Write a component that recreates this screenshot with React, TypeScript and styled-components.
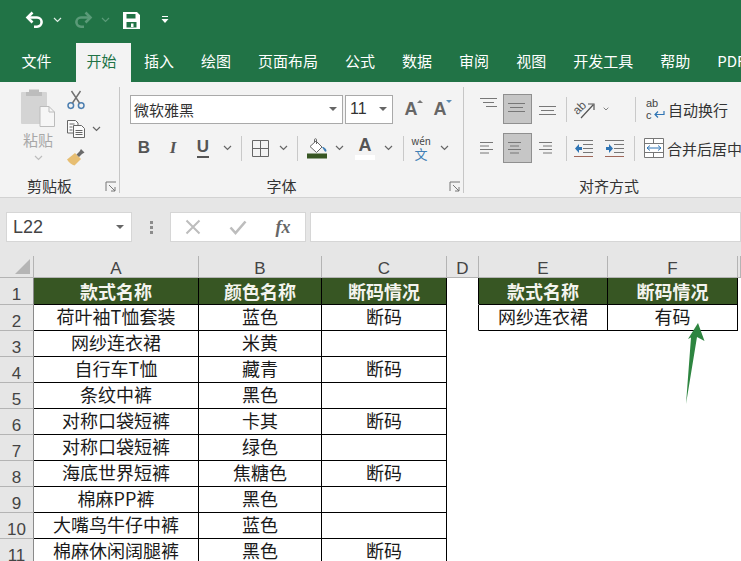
import React from 'react'
import styled, { createGlobalStyle } from 'styled-components'

const CJK = `"Noto Sans CJK SC", "Noto Sans", sans-serif`
const LATIN = `"Liberation Sans", "Noto Sans CJK SC", sans-serif`

const GlobalStyle = createGlobalStyle`
  html, body { margin: 0; padding: 0; background: #fff; }
  body { font-family: ${CJK}; overflow: hidden; }
  * { box-sizing: border-box; }
`

const Page = styled.div`
  width: 741px;
  height: 561px;
  overflow: hidden;
  display: flex;
  flex-direction: column;
`

/* title bar */
const TitleBar = styled.div`
  height: 43px;
  flex: none;
  background: #217346;
  display: flex;
  align-items: center;
  padding: 0 0 3px 25px;
`
const Slot = styled.div<{ $w: number; $ml?: number }>`
  width: ${({ $w }) => $w}px;
  margin-left: ${({ $ml }) => $ml || 0}px;
  flex: none;
  height: 100%;
  display: flex;
  align-items: center;
  justify-content: center;
`

/* tabs */
const TabBar = styled.div`
  height: 39px;
  flex: none;
  background: #217346;
  display: flex;
  padding-left: 8px;
  overflow: hidden;
`
const Tab = styled.div<{ $active?: boolean }>`
  flex: none;
  height: 39px;
  padding: ${({ $active }) => ($active ? '0 14px 0 11px' : '0 13.5px')};
  margin-left: ${({ $active }) => ($active ? '10.5px' : '0')};
  line-height: 35px;
  font-size: 15px;
  white-space: nowrap;
  color: ${({ $active }) => ($active ? '#217346' : '#fff')};
  background: ${({ $active }) => ($active ? '#f3f3f3' : 'transparent')};
`

/* ribbon */
const Ribbon = styled.div`
  height: 116px;
  flex: none;
  background: #f3f3f3;
  border-bottom: 1px solid #d2d2d2;
  display: flex;
  overflow: hidden;
`
const Group = styled.div<{ $w: number }>`
  width: ${({ $w }) => $w}px;
  flex: none;
  display: flex;
  flex-direction: column;
  position: relative;
  &::after {
    content: '';
    position: absolute;
    right: 0;
    top: 5px;
    bottom: 4px;
    width: 1px;
    background: #c6c6c6;
  }
`
const GroupBody = styled.div`
  flex: 1;
  padding: 12px 0 0 10px;
  display: flex;
  flex-direction: column;
  gap: 9px;
`
const ClipBody = styled.div`
  flex: 1;
  display: flex;
  padding: 6px 0 0 18px;
`
const PasteColumn = styled.div`
  width: 40px;
  display: flex;
  flex-direction: column;
  align-items: center;
  color: #a8a8a8;
  font-size: 15px;
  line-height: 20px;
`
const PasteChevron = styled.div`
  margin-top: 5px;
  line-height: 0;
`
const ClipTools = styled.div`
  margin-left: 9px;
  display: flex;
  flex-direction: column;
  gap: 4.5px;
`
const ClipTool = styled.div`
  height: 24px;
  display: flex;
  align-items: center;
  gap: 7px;
`
const GroupFoot = styled.div`
  height: 22px;
  display: flex;
  align-items: center;
  padding-right: 3px;
`
const FootLabel = styled.div`
  flex: 1;
  text-align: center;
  font-size: 15px;
  line-height: 20px;
  color: #333;
  padding-right: 6px;
  white-space: nowrap;
`
const Row = styled.div`
  height: 30px;
  display: flex;
  align-items: center;
`
const SelectBox = styled.div<{ $w: number; $ml?: number }>`
  width: ${({ $w }) => $w}px;
  margin-left: ${({ $ml }) => $ml || 0}px;
  height: 29px;
  flex: none;
  border: 1px solid #a9a9a9;
  background: #fff;
  display: flex;
  align-items: center;
  justify-content: space-between;
  padding: 0 5px 0 3px;
  font-size: 15px;
  color: #333;
`
const SizeText = styled.span`
  font-family: ${LATIN};
  font-size: 16px;
  padding-left: 1px;
`
const Caret = styled.span`
  width: 0;
  height: 0;
  border-left: 4px solid transparent;
  border-right: 4px solid transparent;
  border-top: 4px solid #666;
`
const Sep = styled.div<{ $l: number; $r: number }>`
  width: 1px;
  height: 25px;
  flex: none;
  background: #c9c9c9;
  margin-left: ${({ $l }) => $l}px;
  margin-right: ${({ $r }) => $r}px;
`
const ActiveSlot = styled.div<{ $on?: boolean }>`
  width: 29px;
  height: 30px;
  flex: none;
  display: flex;
  align-items: center;
  justify-content: center;
  padding-right: ${({ $on }) => ($on ? 1 : 0)}px;
  background: ${({ $on }) => ($on ? '#c6c6c6' : 'transparent')};
  border: ${({ $on }) => ($on ? '1px solid #8f8f8f' : 'none')};
`
const StyleLetter = styled.span<{ $italic?: boolean; $under?: boolean }>`
  font-weight: 700;
  font-size: 17px;
  line-height: 18px;
  color: #555;
  font-style: ${({ $italic }) => ($italic ? 'italic' : 'normal')};
  font-family: ${({ $italic }) => ($italic ? '"Liberation Serif", serif' : LATIN)};
  border-bottom: ${({ $under }) => ($under ? '2px solid #555' : 'none')};
`
const ToolText = styled.span<{ $ml: number }>`
  margin-left: ${({ $ml }) => $ml}px;
  font-size: 15px;
  color: #333;
  white-space: nowrap;
`
const FontColor = styled.div`
  display: flex;
  flex-direction: column;
  align-items: center;
  font-family: ${LATIN};
  font-weight: 700;
  font-size: 18px;
  line-height: 17px;
  color: #555;
  &::after {
    content: '';
    width: 20px;
    height: 5px;
    margin-top: 1px;
    background: #fff;
  }
`
const GrowLetter = styled.span`
  position: relative;
  font-family: ${LATIN};
  font-weight: 700;
  font-size: 18px;
  line-height: 18px;
  color: #666;
`
const GrowMark = styled.span<{ $down?: boolean }>`
  position: absolute;
  left: 12px;
  top: 0;
  width: 0;
  height: 0;
  border-left: 3.5px solid transparent;
  border-right: 3.5px solid transparent;
  border-bottom: ${({ $down }) => ($down ? '0' : '3px solid #777')};
  border-top: ${({ $down }) => ($down ? '3px solid #5b8fb9' : '0')};
`
const Phonetic = styled.div`
  display: flex;
  flex-direction: column;
  align-items: center;
  font-size: 10px;
  line-height: 12px;
  color: #444;
  white-space: nowrap;
`
const PhoneticChar = styled.span`
  font-size: 13px;
  line-height: 14px;
  color: #3f7fb5;
`

/* formula bar */
const FormulaBar = styled.div`
  height: 58px;
  flex: none;
  background: #e6e6e6;
  padding: 14px 0 14px 6px;
  display: flex;
`
const NameBox = styled.div`
  width: 126px;
  flex: none;
  background: #fff;
  border: 1px solid #d6d6d6;
  display: flex;
  align-items: center;
  justify-content: space-between;
  padding: 0 7px 0 6px;
  font-family: ${LATIN};
  font-size: 18px;
  color: #444;
`
const Dots = styled.div`
  width: 38px;
  flex: none;
  display: flex;
  flex-direction: column;
  align-items: center;
  justify-content: center;
  gap: 2px;
`
const Dot = styled.span`
  width: 3px;
  height: 3px;
  background: #8c8c8c;
`
const FnBox = styled.div`
  width: 136px;
  flex: none;
  background: #fff;
  border: 1px solid #d6d6d6;
  display: flex;
  align-items: center;
`
const FnSlot = styled.div<{ $w: number }>`
  width: ${({ $w }) => $w}px;
  display: flex;
  justify-content: center;
  align-items: center;
`
const FxText = styled.span`
  font-family: "Liberation Serif", serif;
  font-style: italic;
  font-weight: 700;
  font-size: 18px;
  color: #666;
`
const FormulaInput = styled.div`
  flex: 1;
  margin-left: 4px;
  background: #fff;
  border: 1px solid #d6d6d6;
`

/* sheet */
const Sheet = styled.div`
  position: relative;
  flex: 1;
  min-height: 0;
  overflow: hidden;
  display: grid;
  grid-template-columns: 34px 165px 123px 125px 32px 129px 130px 1fr;
  grid-template-rows: 22px 27px repeat(10, 26px);
  background: #fff;
`
const Corner = styled.div`
  background: #e6e6e6;
  border-right: 1px solid #b4b4b4;
  border-bottom: 1px solid #b4b4b4;
  display: flex;
  align-items: flex-end;
  justify-content: flex-end;
  padding: 0 3px 3px 0;
`
const Triangle = styled.span`
  width: 0;
  height: 0;
  border-left: 15px solid transparent;
  border-bottom: 15px solid #b5b5b5;
`
const ColHead = styled.div`
  background: #e6e6e6;
  border-right: 1px solid #b4b4b4;
  border-bottom: 1px solid #b4b4b4;
  font-family: ${LATIN};
  font-size: 17px;
  line-height: 25px;
  text-align: center;
  color: #444;
  overflow: hidden;
`
const RowHead = styled.div`
  background: #e6e6e6;
  border-right: 1px solid #8a8a8a;
  border-bottom: 1px solid #b4b4b4;
  font-family: ${LATIN};
  font-size: 17px;
  line-height: 33px;
  text-align: center;
  color: #444;
  overflow: hidden;
`
const Cell = styled.div<{ $kind: 'head' | 'data' | 'blank'; $edge?: boolean }>`
  display: flex;
  align-items: center;
  justify-content: center;
  font-size: 18px;
  white-space: nowrap;
  padding-bottom: ${({ $kind }) => ($kind === 'head' ? 1 : 3)}px;
  color: ${({ $kind }) => ($kind === 'head' ? '#f4f4ee' : '#1a1a1a')};
  font-weight: ${({ $kind }) => ($kind === 'head' ? 700 : 400)};
  background: ${({ $kind }) => ($kind === 'head' ? '#375623' : '#fff')};
  border-right: 1px solid ${({ $kind, $edge }) => ($kind !== 'blank' || $edge ? '#000' : 'transparent')};
  border-bottom: 1px solid ${({ $kind }) => ($kind !== 'blank' ? '#000' : 'transparent')};
`
const Arrow = styled.svg`
  position: absolute;
  left: 680px;
  top: 64px;
`
const IconSvg = styled.svg`
  overflow: visible;
`

const tabs = ['文件', '开始', '插入', '绘图', '页面布局', '公式', '数据', '审阅', '视图', '开发工具', '帮助', 'PDF']
const columns = ['A', 'B', 'C', 'D', 'E', 'F', 'G']
const rows = [
  ['荷叶袖T恤套装', '蓝色', '断码'],
  ['网纱连衣裙', '米黄', ''],
  ['自行车T恤', '藏青', '断码'],
  ['条纹中裤', '黑色', ''],
  ['对称口袋短裤', '卡其', '断码'],
  ['对称口袋短裤', '绿色', ''],
  ['海底世界短裤', '焦糖色', '断码'],
  ['棉麻PP裤', '黑色', ''],
  ['大嘴鸟牛仔中裤', '蓝色', ''],
  ['棉麻休闲阔腿裤', '黑色', '断码'],
]

const Chevron = ({ color = '#666' }: { color?: string }) => (
  <svg width="9" height="6" viewBox="0 0 9 6" fill="none" stroke={color} strokeWidth="1.2">
    <path d="M1 1l3.5 3.5L8 1" />
  </svg>
)

const Undo = ({ flip, color }: { flip?: boolean; color: string }) => (
  <svg width="20" height="18" viewBox="0 0 20 18" fill="none" stroke={color} strokeWidth="2.6" style={flip ? { transform: 'scaleX(-1)' } : undefined}>
    <path d="M2.5 6.5H12a4.6 4.6 0 0 1 0 9.2H9" />
    <path d="M7.5 1.5l-5 5 5 5" />
  </svg>
)

const Save = () => (
  <svg width="17" height="17" viewBox="0 0 17 17">
    <path fill="#fff" fillRule="evenodd" d="M0 0h14l3 3v14H0zM3.5 2v4.5h9V2zM3.5 10v5.5h10V10zM8 11.5h2.5V15H8z" />
  </svg>
)

const Customize = () => (
  <svg width="8" height="9" viewBox="0 0 8 9" fill="#fff">
    <path d="M1 0h6v1H1zM0.5 3h7L4 7z" />
  </svg>
)

const PasteIcon = () => (
  <svg width="36" height="42" viewBox="0 0 36 42">
    <rect x="1" y="4" width="26" height="32" rx="1" fill="#d4d4d4" />
    <path d="M9 4V1.5h10V4h3v4H6V4z" fill="#bdbdbd" />
    <path d="M20 18.5h9l5.5 5.5v14.5H20z" fill="#f6f6f6" stroke="#bcbcbc" />
    <path d="M29 18.5V24h5.5" fill="none" stroke="#bcbcbc" />
  </svg>
)

const Scissors = () => (
  <svg width="18" height="20" viewBox="0 0 18 20" fill="none">
    <circle cx="3.8" cy="15.6" r="2.8" stroke="#4d7fb0" strokeWidth="1.5" />
    <circle cx="14.2" cy="15.6" r="2.8" stroke="#4d7fb0" strokeWidth="1.5" />
    <path d="M5.5 13L13.5 1M12.5 13L4.5 1" stroke="#6f6f6f" strokeWidth="1.4" />
  </svg>
)

const CopyIcon = () => (
  <svg width="18" height="18" viewBox="0 0 18 18" fill="#fbfbfb" stroke="#666">
    <path d="M.5.5h8l2.5 2.5v10H.5z" />
    <path d="M6.5 5.5h8l3 3v9h-11z" />
    <path d="M2.5 4h5M2.5 7h3M2.5 10h3M8.5 10.5h7M8.5 12.5h7M8.5 14.5h7" fill="none" />
  </svg>
)

const Painter = () => (
  <svg width="18" height="17" viewBox="0 0 18 17">
    <path d="M0 10.5L8 4l6 6-6.500 6.500C5 16 2 13.500 0 10.500z" fill="#e7be72" />
    <path d="M9.500 5.500l3-3 1.500-2.500 3.500 3.500-2.500 1.500-3 3z" fill="#6b6b6b" />
  </svg>
)

const Launcher = () => (
  <svg width="12" height="11" viewBox="0 0 12 11" fill="none" stroke="#777">
    <path d="M1 10V1h10M4 4l6 6M10 6v4H6" />
  </svg>
)

const BorderIcon = () => (
  <svg width="17" height="17" viewBox="0 0 17 17" fill="none" stroke="#666">
    <path d="M.5.5h16v16H.5zM8.5.5v16M.5 8.5h16" />
  </svg>
)

const FillIcon = () => (
  <svg width="21" height="21" viewBox="0 0 21 21">
    <path d="M3 8.5L9 3l6 6-5.5 5.500z" fill="#fff" stroke="#666" />
    <path d="M7.5 4V1.500c0-1 2-1 2 0V6" fill="none" stroke="#666" />
    <path d="M15 9l2.500 4c.5 1 2 1 2-.5 0-1-2-4-4.500-3.500z" fill="#3f7fb5" />
    <rect x="0" y="15.500" width="20" height="5" fill="#375623" />
  </svg>
)

const lineSets: Record<string, number[][]> = {
  top: [[0, 17], [3, 14], [6, 17]],
  middle: [[0, 17], [2, 15], [0, 17]],
  bottom: [[0, 17], [2, 15], [0, 17]],
  left: [[0, 13], [0, 9], [0, 13], [0, 9]],
  center: [[0, 13], [2, 11], [0, 13], [2, 11]],
  right: [[0, 13], [4, 13], [0, 13], [4, 13]],
}

const AlignIcon = ({ name, dy = 0 }: { name: string; dy?: number }) => {
  const lines = lineSets[name]
  const gap = lines.length === 3 ? 4 : 3.5
  return (
    <svg width="18" height="18" viewBox="0 0 18 18" stroke="#777" style={{ transform: `translateY(${dy}px)` }}>
      {lines.map(([a, b], i) => (
        <path key={i} d={`M${a} ${3.5 + i * gap}H${b}`} />
      ))}
    </svg>
  )
}

const OrientIcon = () => (
  <IconSvg width="26" height="22" viewBox="0 0 26 22" fill="none">
    <text x="1" y="13" fontSize="12" fontFamily="Liberation Sans" fill="#555" transform="rotate(-45 8 11)">ab</text>
    <path d="M8 20L20 7M15 6h6v6" stroke="#555" strokeWidth="1.2" />
  </IconSvg>
)

const IndentIcon = ({ flip }: { flip?: boolean }) => (
  <svg width="20" height="17" viewBox="0 0 20 17" fill="none">
    <g stroke="#777">
      <path d="M0 .5h19M9 4.500h10M9 8.500h10M9 12.500h10" />
      <path d="M0 16.500h19" stroke="#a0685a" />
    </g>
    <path
      d={flip ? 'M1 7h3V4l4 4.500L4 13v-3H1z' : 'M8 7H5V4L1 8.500 5 13v-3h3z'}
      fill="#2f75b5"
    />
  </svg>
)

const WrapIcon = () => (
  <IconSvg width="20" height="22" viewBox="0 0 20 22" fill="none">
    <text x="0" y="9" fontSize="11" fontFamily="Liberation Sans" fill="#444">ab</text>
    <text x="0" y="21" fontSize="11" fontFamily="Liberation Sans" fill="#444">c</text>
    <path d="M18 13v3.500H9M12 13.500l-3 3 3 3" stroke="#2f75b5" strokeWidth="1.2" />
  </IconSvg>
)

const MergeIcon = () => (
  <svg width="20" height="20" viewBox="0 0 20 20" fill="#fff" stroke="#777">
    <path d="M.5.5h19v19H.5zM.5 5.500h19M.5 14.500h19M9.500.5v5M9.500 14.500v5" />
    <path d="M3 10h14M6 7.500L3 10l3 2.500M14 7.500l3 2.500-3 2.500" stroke="#2f75b5" fill="none" />
  </svg>
)

const CrossIcon = () => (
  <svg width="16" height="16" viewBox="0 0 16 16" stroke="#bdbdbd" strokeWidth="2">
    <path d="M1.5 1.5l13 13M14.500 1.5l-13 13" />
  </svg>
)

const CheckIcon = () => (
  <svg width="18" height="15" viewBox="0 0 18 15" fill="none" stroke="#bdbdbd" strokeWidth="2.6">
    <path d="M1.5 7.500l5 5.500L16.500 1.500" />
  </svg>
)

export default function App() {
  return (
    <Page>
      <GlobalStyle />
      <TitleBar>
        <Undo color="#fff" />
        <Slot $w={24}><Chevron color="#dfeee6" /></Slot>
        <Slot $w={22} $ml={3}><Undo flip color="#5a9a78" /></Slot>
        <Slot $w={17} $ml={3}><Chevron color="#5a9a78" /></Slot>
        <Slot $w={17} $ml={9}><Save /></Slot>
        <Slot $w={8} $ml={21}><Customize /></Slot>
      </TitleBar>

      <TabBar>
        {tabs.map((t) => (
          <Tab key={t} $active={t === '开始'}>{t}</Tab>
        ))}
      </TabBar>

      <Ribbon>
        <Group $w={120}>
          <ClipBody>
            <PasteColumn>
              <PasteIcon />
              <span>粘贴</span>
              <PasteChevron><Chevron color="#bdbdbd" /></PasteChevron>
            </PasteColumn>
            <ClipTools>
              <ClipTool><Scissors /></ClipTool>
              <ClipTool><CopyIcon /><Chevron /></ClipTool>
              <ClipTool><Painter /></ClipTool>
            </ClipTools>
          </ClipBody>
          <GroupFoot>
            <FootLabel>剪贴板</FootLabel>
            <Launcher />
          </GroupFoot>
        </Group>

        <Group $w={344}>
          <GroupBody>
            <Row>
              <SelectBox $w={213}>微软雅黑<Caret /></SelectBox>
              <SelectBox $w={48} $ml={2}><SizeText>11</SizeText><Caret /></SelectBox>
              <Slot $w={36}><GrowLetter>A<GrowMark /></GrowLetter></Slot>
              <Slot $w={22}><GrowLetter>A<GrowMark $down /></GrowLetter></Slot>
            </Row>
            <Row>
              <Slot $w={28}><StyleLetter>B</StyleLetter></Slot>
              <Slot $w={30}><StyleLetter $italic>I</StyleLetter></Slot>
              <Slot $w={30}><StyleLetter $under>U</StyleLetter></Slot>
              <Slot $w={18}><Chevron /></Slot>
              <Sep $l={5} $r={4} />
              <Slot $w={28}><BorderIcon /></Slot>
              <Slot $w={18}><Chevron /></Slot>
              <Sep $l={5} $r={6} />
              <Slot $w={26}><FillIcon /></Slot>
              <Slot $w={18}><Chevron /></Slot>
              <Slot $w={34}><FontColor>A</FontColor></Slot>
              <Slot $w={12}><Chevron /></Slot>
              <Sep $l={9} $r={8} />
              <Slot $w={18}>
                <Phonetic>wén<PhoneticChar>文</PhoneticChar></Phonetic>
              </Slot>
              <Slot $w={28}><Chevron /></Slot>
            </Row>
          </GroupBody>
          <GroupFoot>
            <FootLabel>字体</FootLabel>
            <Launcher />
          </GroupFoot>
        </Group>

        <Group $w={311}>
          <GroupBody>
            <Row>
              <ActiveSlot><AlignIcon name="top" dy={-5} /></ActiveSlot>
              <ActiveSlot $on><AlignIcon name="middle" /></ActiveSlot>
              <Slot $w={32}><AlignIcon name="bottom" dy={3} /></Slot>
              <Sep $l={2} $r={2} />
              <Slot $w={34}><OrientIcon /></Slot>
              <Slot $w={6}><Chevron /></Slot>
              <Sep $l={26} $r={10} />
              <Slot $w={20}><WrapIcon /></Slot>
              <ToolText $ml={2}>自动换行</ToolText>
            </Row>
            <Row>
              <ActiveSlot><AlignIcon name="left" /></ActiveSlot>
              <ActiveSlot $on><AlignIcon name="center" /></ActiveSlot>
              <Slot $w={32}><AlignIcon name="right" /></Slot>
              <Sep $l={2} $r={5} />
              <Slot $w={24}><IndentIcon /></Slot>
              <Slot $w={38}><IndentIcon flip /></Slot>
              <Sep $l={0} $r={9} />
              <Slot $w={20}><MergeIcon /></Slot>
              <ToolText $ml={3}>合并后居中</ToolText>
            </Row>
          </GroupBody>
          <GroupFoot>
            <FootLabel>对齐方式</FootLabel>
            <Launcher />
          </GroupFoot>
        </Group>
      </Ribbon>

      <FormulaBar>
        <NameBox>L22<Caret /></NameBox>
        <Dots><Dot /><Dot /><Dot /></Dots>
        <FnBox>
          <FnSlot $w={44}><CrossIcon /></FnSlot>
          <FnSlot $w={46}><CheckIcon /></FnSlot>
          <FnSlot $w={44}><FxText>fx</FxText></FnSlot>
        </FnBox>
        <FormulaInput />
      </FormulaBar>

      <Sheet>
        <Corner><Triangle /></Corner>
        {columns.map((c) => (
          <ColHead key={c}>{c === 'G' ? '' : c}</ColHead>
        ))}

        <RowHead>1</RowHead>
        <Cell $kind="head">款式名称</Cell>
        <Cell $kind="head">颜色名称</Cell>
        <Cell $kind="head">断码情况</Cell>
        <Cell $kind="blank" $edge />
        <Cell $kind="head">款式名称</Cell>
        <Cell $kind="head">断码情况</Cell>
        <Cell $kind="blank" />

        {rows.map((r, i) => (
          <React.Fragment key={i}>
            <RowHead>{i + 2}</RowHead>
            <Cell $kind="data">{r[0]}</Cell>
            <Cell $kind="data">{r[1]}</Cell>
            <Cell $kind="data">{r[2]}</Cell>
            <Cell $kind="blank" $edge={i === 0} />
            <Cell $kind={i === 0 ? 'data' : 'blank'}>{i === 0 ? '网纱连衣裙' : ''}</Cell>
            <Cell $kind={i === 0 ? 'data' : 'blank'}>{i === 0 ? '有码' : ''}</Cell>
            <Cell $kind="blank" />
          </React.Fragment>
        ))}

        <Arrow width="30" height="90" viewBox="0 0 30 90">
          <path d="M18 3L24.5 21 17 17 6 84 11 17.500 8 19z" fill="#2e8540" />
        </Arrow>
      </Sheet>
    </Page>
  )
}
